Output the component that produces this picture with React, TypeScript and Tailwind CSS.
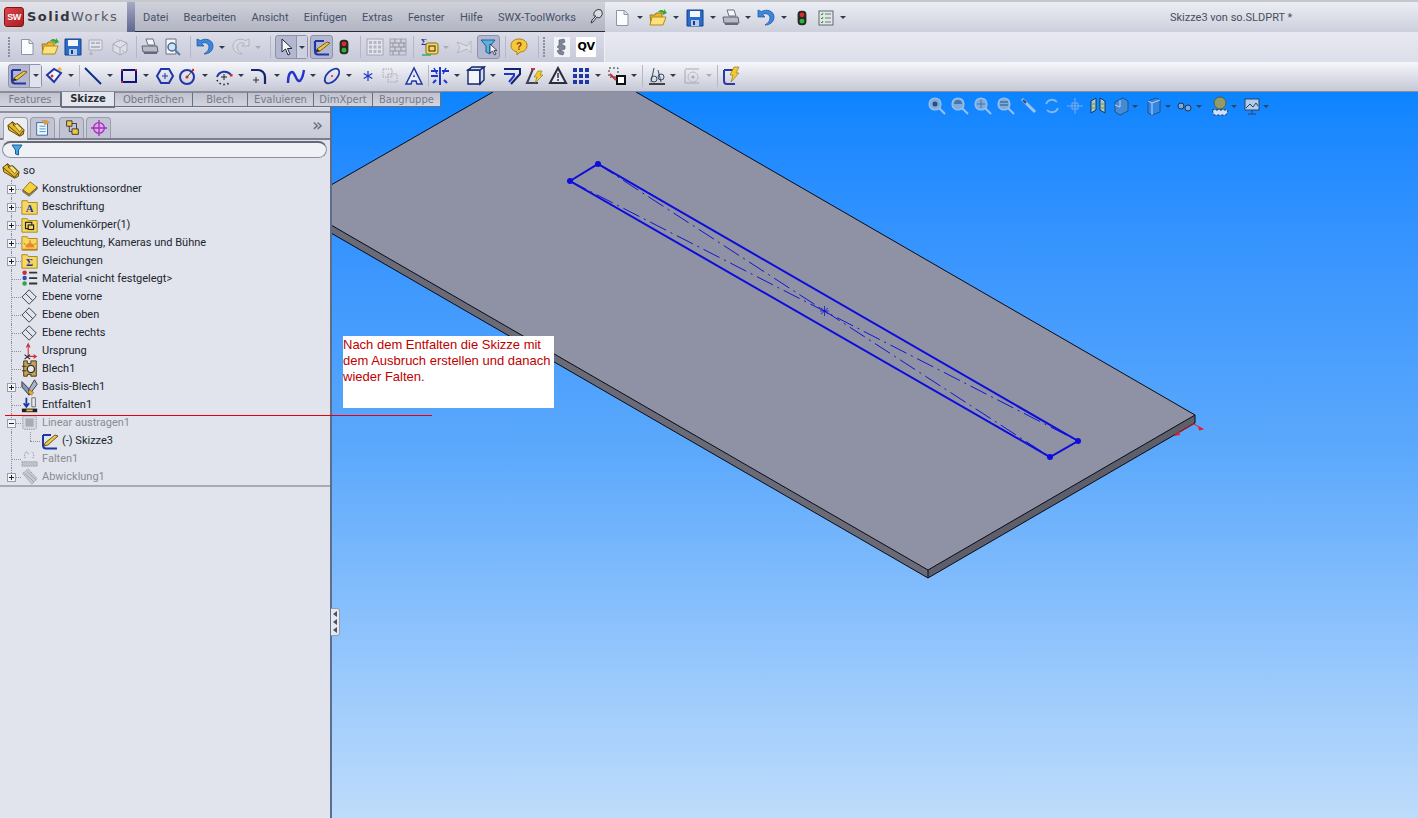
import React from "react";

type P = { children?: React.ReactNode; className?: string };
const S = ({ children, className = "w-5 h-5" }: P) => (
  <svg viewBox="0 0 20 20" className={`shrink-0 ${className}`}>{children}</svg>
);

const Caret = ({ dim }: { dim?: boolean }) => (
  <span className="flex w-2 h-5 items-center justify-center shrink-0">
    <span className={`w-0 h-0 border-l-[3px] border-r-[3px] border-t-[3px] border-l-transparent border-r-transparent ${dim ? "border-t-[#a8aab8]" : "border-t-[#33384a]"}`} />
  </span>
);
const Sep = ({ className = "" }: { className?: string }) => <span className={`w-px h-[22px] bg-[#b5b7c8] shrink-0 ${className}`} />;
const Grip = ({ className = "" }: { className?: string }) => (
  <span className={`w-[10px] h-[22px] shrink-0 flex flex-col items-center justify-between py-px ${className}`}>
    {[0, 1, 2, 3, 4, 5, 6].map((i) => <span key={i} className="w-[2px] h-[2px] bg-[#8b8ea2]" />)}
  </span>
);
const M = ({ c, children }: { c: string; children: React.ReactNode }) => <span className={`flex shrink-0 ${c}`}>{children}</span>;

const NewDoc = () => <S><path d="M4.500 2.500h8l3.500 3.500v11.500H4.500z" fill="#fbfcfe" stroke="#8d95aa" /><path d="M12 2.500v4h4" fill="#e3e6ef" stroke="#8d95aa" /></S>;
const Open = () => <S><path d="M2 7h5l1-2h6v11H3z" fill="#e9b52c" stroke="#9c7a1a" /><path d="M4 9h14l-3 8H2z" fill="#fbe27a" stroke="#b28a20" /><path d="M10 4c2-2.500 4-2.500 6-1V1l3 4-4 2V5c-2-1-3-1-5-1z" fill="#35a83a" /></S>;
const Save = () => <S><path d="M2 2h16v16H2z" fill="#2a6cc8" stroke="#123f8c" /><path d="M5 3h10v6H5z" fill="#f3f6fb" /><path d="M6 12h8v6H6z" fill="#b7cbe8" /><path d="M8 13h2v4H8z" fill="#123f8c" /></S>;
const Print = () => <S><path d="M6 2h7l2 6H8z" fill="#f5f6f9" stroke="#6d7080" /><path d="M2 9h15l1 6H3z" fill="#b8bac6" stroke="#5d6070" /><path d="M4 15h13v2H4z" fill="#666a78" /></S>;
const Preview = () => <S><path d="M4 2h10v15H4z" fill="#f6f7fb" stroke="#6d7080" /><circle cx="10" cy="10" r="4" fill="#cfe3f6" stroke="#4b6b92" strokeWidth="1.500" /><path d="M13 13l5 5" stroke="#4d7fb0" strokeWidth="2" /></S>;
const Undo = () => <S><path d="M2 2v7h7L6.500 6.500C10 4.500 14 6.500 14 10c0 3-2 5-5 7 5 0 9-3 9-8 0-6-7-8.500-12.500-5.500z" fill="#3d86dc" stroke="#14509c" strokeWidth=".7" /></S>;
const Redo = () => <S><g transform="matrix(-1 0 0 1 20 0)"><path d="M2 2v7h7L6.500 6.500C10 4.500 14 6.500 14 10c0 3-2 5-5 7 5 0 9-3 9-8 0-6-7-8.500-12.500-5.500z" fill="#d8dae2" stroke="#a6a9b8" strokeWidth=".8" /></g></S>;
const Traffic = () => <S className="w-4 h-5"><rect x="4.500" y="1" width="11" height="18" rx="4.500" fill="#262a26" /><circle cx="10" cy="6" r="3" fill="#e02a2a" /><circle cx="10" cy="14" r="3" fill="#2fb43a" /></S>;
const GrayForm = () => <S><path d="M3 3h13v10H3z" fill="#e4e5ec" stroke="#a9abba" /><path d="M5 5h4v2H5zM10 5h4v2h-4zM5 9h9v2H5z" fill="#b4b6c4" /><path d="M5 14v4m-2-2l2 2 2-2" stroke="#a9abba" fill="none" /></S>;
const GrayCube = () => <S><path d="M3 7l7-4 7 3v8l-7 4-7-4z" fill="#dddfe7" stroke="#a9abba" /><path d="M3 7l7 4 7-5M10 11v7" stroke="#a9abba" fill="none" /><path d="M7 2l3 3M12 13l4 4" stroke="#b5b7c4" /></S>;
const Cursor = () => <S><path d="M6 2v13l3.500-3 2.500 6 2-1-2.500-5.500H16z" fill="#f4f5f9" stroke="#23263a" /></S>;
const SketchIco = () => <S><path d="M3 4v10c0 2 1 3.500 3 3.500h11" fill="none" stroke="#1f36a8" strokeWidth="2.200" /><path d="M3 4h9" stroke="#1f36a8" strokeWidth="2" /><path d="M5 12l10-7 3 1-10 8-4 1z" fill="#f0c83c" stroke="#5a4410" strokeWidth=".8" /><path d="M4 15l1-3 3 2z" fill="#222" /></S>;
const Grid = ({ c = "#b4b6c4" }: { c?: string }) => <S><rect x="2" y="2" width="16" height="16" fill="#e4e5ec" stroke="#a4a6b6" /><path d="M4 4h3v3H4zM8.500 4h3v3h-3zM13 4h3v3h-3zM4 8.500h3v3H4zM8.500 8.500h3v3h-3zM13 8.500h3v3h-3zM4 13h3v3H4zM8.500 13h3v3h-3zM13 13h3v3h-3z" fill={c} /></S>;
const Bricks = () => <S><rect x="2" y="2" width="16" height="16" fill="#cfd0da" stroke="#a4a6b6" /><path d="M2 6h16M2 10h16M2 14h16M7 2v4M13 2v4M5 6v4M11 6v4M16 6v4M7 10v4M13 10v4M5 14v4M11 14v4" stroke="#8f91a2" fill="none" /></S>;
const SigmaBox = () => <S><text x="1" y="8" fontSize="9" fontWeight="700" fill="#1f36a8" fontFamily="Liberation Serif">Σ</text><rect x="6" y="6" width="12" height="11" rx="2" fill="#f6d860" stroke="#8a6d10" /><rect x="9" y="9" width="6" height="5" fill="none" stroke="#2b2b2b" /><path d="M2 18h9" stroke="#3a7" strokeWidth="1.500" /></S>;
const GrayArrows = () => <S><path d="M2 5l10 4 4-5v12l-4-4-10 4 3-5z" fill="#dcdde4" stroke="#b3b5c2" /></S>;
const FilterCursor = () => <S><path d="M2 3h14l-5 6v8l-4-2V9z" fill="#5ab2e0" stroke="#16609a" /><path d="M11 7v9l2.500-2 2 4 1.500-1-2-3.500H18z" fill="#f4f5f9" stroke="#23263a" strokeWidth=".8" /></S>;
const Help = () => <S><path d="M10 2c5 0 8 2.500 8 6.500S15 15 11 15l-3 3v-3.200C4.500 14 2 12 2 8.500S5 2 10 2z" fill="#f5c93c" stroke="#a9801a" /><text x="10" y="12.500" textAnchor="middle" fontSize="10" fontWeight="700" fill="#8f3c12" fontFamily="Liberation Sans">?</text></S>;
const Gear = () => <S><rect x="2" y="0" width="16" height="20" fill="#f2f3f7" /><path d="M7 3l5-1 1 3-4 2 4 2v3l-5 2 4 1-1 3-4-1-2-3 3-2-3-2 2-2z" fill="#7d8797" stroke="#505a6b" strokeWidth=".6" /></S>;
const Qv = () => <span className="w-5 h-5 bg-white flex items-center justify-center text-[11px] font-bold text-black font-['DejaVu_Sans'] shrink-0 tracking-tighter ml-px">QV</span>;
const Options = () => <S><rect x="3" y="3" width="14" height="14" fill="#e2e7e4" stroke="#5d6a70" /><path d="M9 6h6M9 10h6M9 14h6" stroke="#6d7880" /><path d="M5 6l1 1 1-2M5 10l1 1 1-2M5 14l1 1 1-2" stroke="#1d9a3a" fill="none" /></S>;
const Pin = () => <S><path d="M8 9a5 5 0 017-6 5 5 0 01-2 8l-2-1-4 5-2 1 1-3 4-4z" fill="#dcdde3" stroke="#3b3d46" /></S>;

const Dimension = () => <S><path d="M3 9l7-6 7 4-7 9z" fill="#f5f6fa" stroke="#1f36a8" strokeWidth="2" /><circle cx="8" cy="10" r="1.500" fill="#c33" /><path d="M13 3l3-2 2 3-2 1z" fill="#f0b82c" /></S>;
const Line = () => <S><path d="M2 2l16 16" stroke="#0b2f86" strokeWidth="2" /></S>;
const RectI = () => <S><rect x="3" y="4" width="14" height="12" fill="none" stroke="#12127a" strokeWidth="2" /><path d="M2 3h2v2H2zM16 3h2v2h-2zM2 15h2v2H2z" fill="#d4262a" /></S>;
const Poly = () => <S><path d="M6 3h8l4 7-4 7H6l-4-7z" fill="none" stroke="#1f36a8" strokeWidth="2" /><path d="M10 7v6M7 10h6" stroke="#1f36a8" /></S>;
const CircleI = () => <S><circle cx="10" cy="11" r="7" fill="none" stroke="#1f36a8" strokeWidth="2" /><path d="M10 11l6-7" stroke="#333" /><circle cx="10" cy="11" r="1.500" fill="#d4262a" /><circle cx="16" cy="4" r="1.200" fill="#d4262a" /></S>;
const Arc = () => <S><path d="M3 11a8 8 0 0114-2" fill="none" stroke="#1f36a8" strokeWidth="2" /><path d="M3 14a8 8 0 0012 3" fill="none" stroke="#222" strokeDasharray="1.500 2.500" strokeWidth="1.500" /><path d="M10 8v6M7 11h6" stroke="#222" /><path d="M16 8h2.500v2.500H16z" fill="#d4262a" /></S>;
const Fillet = () => <S><path d="M2 4h7c4 0 7 3 7 7v7" fill="none" stroke="#14246e" strokeWidth="2.200" /><path d="M7 11v6M4 14h6" stroke="#333" /></S>;
const Spline = () => <S><path d="M2 17c0-8 2-11 4-11 3 0 4 9 7 9 2.500 0 4-5 5-11" fill="none" stroke="#1f36c8" strokeWidth="2.400" /></S>;
const Ellipse = () => <S><ellipse cx="10" cy="10" rx="9" ry="5" transform="rotate(-45 10 10)" fill="none" stroke="#1f36a8" strokeWidth="1.800" /><circle cx="10" cy="10" r="1" fill="#d4262a" /></S>;
const Asterisk = () => <S><path d="M10 5v10M5.700 7.500l8.600 5M14.300 7.500l-8.600 5" stroke="#1f36c8" strokeWidth="1.200" /></S>;
const DotGrid = () => <S><rect x="3" y="3" width="9" height="8" fill="none" stroke="#a4a6b6" strokeDasharray="1.500 1" /><rect x="8" y="8" width="9" height="8" fill="none" stroke="#a4a6b6" strokeDasharray="1.500 1" /></S>;
const AIcon = () => <S><path d="M10 2L2 18h5l1-3h4l1 3h5z" fill="#e8ecf6" stroke="#1f36a8" strokeWidth="1.500" /><path d="M9 11l1-3 1 3z" fill="#1f36a8" /></S>;
const Mirror = () => <S><path d="M1 5h7M1 10h7M12 5l7 0M10 1v18M6 14l-3 3M14 14l3 3" stroke="#1f36c8" strokeWidth="2" /><path d="M4 2l3 6M16 2l-3 6" stroke="#1f36c8" strokeWidth="1.500" /></S>;
const Cube = () => <S><path d="M2 4h12v14H2z" fill="#f2f4fa" stroke="#14246e" strokeWidth="1.400" /><path d="M14 4l4-3v13l-4 4zM2 4l4-3h12l-4 3z" fill="#cfe0f4" stroke="#14246e" strokeWidth="1.400" /></S>;
const Offset = () => <S><path d="M2 3h16v5l-9 10" fill="none" stroke="#14246e" strokeWidth="2" /><path d="M2 8h10v2l-5 6" fill="none" stroke="#1f36c8" strokeWidth="2" /></S>;
const BoltTri = () => <S><path d="M8 3L2 17h11" fill="none" stroke="#40405a" strokeWidth="2" /><path d="M6 3h4" stroke="#c8303a" strokeWidth="2" /><path d="M13 5l-4 6h3l-2 6 8-8h-3l2-4z" fill="#f3cc2a" stroke="#8a6d10" strokeWidth=".6" /></S>;
const Tri = () => <S><path d="M10 2L2 17h16z" fill="#e6e8f2" stroke="#2b2b3a" strokeWidth="2" /><path d="M9.300 7h1.400v5H9.300zM9.300 13h1.400v2H9.300z" fill="#2b2b3a" /></S>;
const Pattern = () => <S><path d="M2 2h4v4H2zM8 2h4v4H8zM14 2h4v4h-4zM2 8h4v4H2zM8 8h4v4H8zM14 8h4v4h-4zM2 14h4v4H2zM8 14h4v4H8zM14 14h4v4h-4z" fill="#1f36a8" /></S>;
const Relation = () => <S><path d="M2 2h9v9H2z" fill="none" stroke="#333" strokeDasharray="2 2" /><path d="M10 10h8v8h-8z" fill="#fff" stroke="#111" strokeWidth="2" /><path d="M3 8l6 6" stroke="#c8303a" strokeWidth="2" /></S>;
const Measure = () => <S><path d="M2 18h16" stroke="#111" strokeWidth="1.500" /><path d="M7 2l-3 14M11 4l3 12" stroke="#3a4a60" /><circle cx="7" cy="13" r="3" fill="none" stroke="#3a4a60" /><circle cx="14" cy="11" r="3" fill="none" stroke="#3a4a60" /></S>;
const GrayTarget = () => <S><path d="M3 4v13h14" fill="none" stroke="#a4a6b6" /><path d="M3 3h14" stroke="#a4a6b6" /><circle cx="11" cy="11" r="5" fill="none" stroke="#b8bac6" /><circle cx="11" cy="11" r="1.500" fill="#a4a6b6" /></S>;
const Rebuild = () => <S><path d="M3 4h9M3 4v11c0 2 1 3 3 3h8" fill="none" stroke="#2a3aa8" strokeWidth="2" /><path d="M13 1l-4 8h3l-2 7 8-9h-3l3-6z" fill="#f3cc2a" stroke="#8a6d10" strokeWidth=".6" /></S>;

const Zoom = ({ children }: P) => <S><circle cx="8" cy="8" r="6" fill="#8db4de" stroke="#b6cde6" strokeWidth="1.200" />{children}<path d="M12 12l6 6" stroke="#b4cde8" strokeWidth="2" /></S>;

const menu = ["Datei", "Bearbeiten", "Ansicht", "Einfügen", "Extras", "Fenster", "Hilfe", "SWX-ToolWorks"];
const tabs: [string, string, boolean][] = [
  ["Features", "w-[61px]", false],
  ["Skizze", "w-[54px]", true],
  ["Oberflächen", "w-[78px]", false],
  ["Blech", "w-[55px]", false],
  ["Evaluieren", "w-[66px]", false],
  ["DimXpert", "w-[59px]", false],
  ["Baugruppe", "w-[68px]", false],
];

const Folder = ({ children }: P) => (
  <S className="w-[18px] h-[18px]"><path d="M1 3h6l1 2h10v13H1z" fill="#f6d860" stroke="#a68416" />{children}</S>
);
const RootBlock = () => (
  <S className="w-[18px] h-[18px]"><path d="M1 6l5-4 4 3 2-1 7 7-1 5-4 2L2 11z" fill="#e6b92c" stroke="#4a3a08" /><path d="M1 6l13 11M6 2l2 5M14 17l4-5" fill="none" stroke="#4a3a08" /><path d="M8 6l3-2 6 6-3 3z" fill="#f7e27c" stroke="#4a3a08" strokeWidth=".7" /></S>
);
const TreeIcons: Record<string, React.ReactNode> = {
  design: <S className="w-[18px] h-[18px]"><path d="M2 11l8-9 8 6-9 8z" fill="#f5d23c" stroke="#8a6d10" /><path d="M2 11v2l7 5 9-8V8l-9 8z" fill="#a98b5a" stroke="#6b5a3a" /></S>,
  a: <Folder><text x="9.500" y="15.500" textAnchor="middle" fontSize="12" fontWeight="700" fill="#1f36a8" fontFamily="Liberation Serif">A</text></Folder>,
  body: <Folder><rect x="5" y="7" width="7" height="7" fill="none" stroke="#222" strokeWidth="1.300" /><rect x="8" y="10" width="6" height="5" fill="#f6d860" stroke="#222" strokeWidth="1.300" /></Folder>,
  light: <Folder><path d="M5 15a5 5 0 0110 0z" fill="#e8872a" /><path d="M3 10l2 2M10 7v3M17 10l-2 2M2 17h16" stroke="#c25a12" /></Folder>,
  sigma: <Folder><text x="9.500" y="15.500" textAnchor="middle" fontSize="12" fontWeight="700" fill="#1f36a8" fontFamily="Liberation Serif">Σ</text></Folder>,
  material: <S className="w-[18px] h-[18px]"><circle cx="4" cy="3" r="2.500" fill="#c8303a" /><circle cx="4" cy="9" r="2.500" fill="#2a50c0" /><circle cx="4" cy="15" r="2.500" fill="#2fa83a" /><path d="M9 3h9M9 9h9M9 15h9" stroke="#333" strokeWidth="2" /></S>,
  plane: <S className="w-[18px] h-[18px]"><path d="M9 2l8 8-8 8-8-8z" fill="none" stroke="#333" /><path d="M5 6l8 8" stroke="#333" /></S>,
  origin: <S className="w-[18px] h-[18px]"><path d="M8 16V3M6 6l2-4 2 4" fill="none" stroke="#c8303a" strokeWidth="1.200" /><path d="M8 16h9M14 14l3 2-3 2" fill="none" stroke="#c8303a" strokeWidth="1.200" /><path d="M4 14l6 5M10 14l-6 5" stroke="#222" strokeWidth="1.200" /></S>,
  sheet: <S className="w-[18px] h-[18px]"><path d="M3 1h4v3h4V1h6v17h-6v-2H7v2H3z" fill="#c8a456" stroke="#3a3010" /><circle cx="11" cy="10" r="4" fill="#e8eaf2" stroke="#333" strokeWidth="1.500" /><path d="M1 7h5M1 12h5" stroke="#3a3010" /></S>,
  base: <S className="w-[18px] h-[18px]"><path d="M1 4l8 8v7L1 10z" fill="#7f94b8" stroke="#333" /><path d="M9 12l6-10 3 5-9 12z" fill="#a9b4c8" stroke="#333" /><path d="M9 13l5 3-2 3-4-2z" fill="#f0a82c" stroke="#775510" strokeWidth=".6" /></S>,
  unfold: <S className="w-[18px] h-[18px]"><path d="M6 2v9M3 8l3 4 3-4" fill="none" stroke="#1f36a8" strokeWidth="2" /><path d="M12 2h4v10h-4z" fill="#e8eaf2" stroke="#666" /><path d="M1 14h17v4H1z" fill="#222" /><path d="M6 15h7v2H6z" fill="#e6c04c" /></S>,
  loft: <S className="w-[18px] h-[18px]"><rect x="2" y="2" width="15" height="15" rx="2" fill="#d7d9e0" stroke="#8a8c98" strokeDasharray="1.500 1" /><rect x="5" y="5" width="9" height="9" fill="#a8aab4" /></S>,
  sketch: <S className="w-[20px] h-[20px]"><path d="M3 4v10c0 2 1 3.500 3 3.500h11" fill="none" stroke="#1f36a8" strokeWidth="2" /><path d="M3 4h8" stroke="#1f36a8" strokeWidth="2" /><path d="M5 12L15 4l3 1-10 9-4 1z" fill="#f0c83c" stroke="#4a3a10" strokeWidth=".8" /></S>,
  fold: <S className="w-[18px] h-[18px]"><path d="M5 9c-2-2-1-6 1-7l3 3M13 9c2-2 1-6-1-7" fill="none" stroke="#a0a2ac" strokeWidth="1.200" strokeDasharray="1.500 1" /><path d="M1 13h17v5H1z" fill="#bfc1ca" stroke="#9a9ca8" strokeDasharray="1.500 1" /></S>,
  flat: <S className="w-[18px] h-[18px]"><path d="M2 6l6-5 10 11-6 6z" fill="#c9cbd4" stroke="#8f919d" strokeDasharray="1.500 1" /><path d="M4 6l10 9M7 4l9 9" stroke="#9a9ca8" /></S>,
};

type Row = { t: string; i: string; exp?: "+" | "-"; dim?: boolean; deep?: boolean };
const rows: Row[] = [
  { t: "Konstruktionsordner", i: "design", exp: "+" },
  { t: "Beschriftung", i: "a", exp: "+" },
  { t: "Volumenkörper(1)", i: "body", exp: "+" },
  { t: "Beleuchtung, Kameras und Bühne", i: "light", exp: "+" },
  { t: "Gleichungen", i: "sigma", exp: "+" },
  { t: "Material <nicht festgelegt>", i: "material" },
  { t: "Ebene vorne", i: "plane" },
  { t: "Ebene oben", i: "plane" },
  { t: "Ebene rechts", i: "plane" },
  { t: "Ursprung", i: "origin" },
  { t: "Blech1", i: "sheet" },
  { t: "Basis-Blech1", i: "base", exp: "+" },
  { t: "Entfalten1", i: "unfold" },
  { t: "Linear austragen1", i: "loft", exp: "-", dim: true },
  { t: "(-) Skizze3", i: "sketch", deep: true },
  { t: "Falten1", i: "fold", dim: true },
  { t: "Abwicklung1", i: "flat", exp: "+", dim: true },
];

function TreeRow({ r, last }: { r: Row; last: boolean }) {
  return (
    <div className="relative flex h-[18px] items-center">
      <span className={`absolute left-[11px] top-0 border-l border-dotted border-[#8f929c] ${last ? "h-[9px]" : "h-[18px]"}`} />
      <span className={`absolute top-[9px] border-t border-dotted border-[#8f929c] ${r.deep ? "left-[30px] w-[10px]" : "left-[11px] w-[10px]"}`} />
      {r.deep && <span className="absolute left-[30px] top-0 h-[9px] border-l border-dotted border-[#8f929c]" />}
      {r.exp && (
        <span className="absolute left-[7px] top-[5px] w-[9px] h-[9px] border border-[#9a9da8] bg-[#f4f5f8] flex items-center justify-center">
          <span className="relative w-[5px] h-px bg-[#222]">
            {r.exp === "+" && <span className="absolute left-[2px] top-[-2px] w-px h-[5px] bg-[#222]" />}
          </span>
        </span>
      )}
      {r.deep ? (
        <span className="ml-[40px] flex items-center w-[22px]">{TreeIcons[r.i]}</span>
      ) : (
        <span className="ml-[21px] flex items-center w-[21px]">{TreeIcons[r.i]}</span>
      )}
      <span className={`whitespace-nowrap ${r.dim ? "text-[#8a8d94]" : "text-[#20242c]"}`}>{r.t}</span>
    </div>
  );
}

const Viewport = () => (
  <svg viewBox="1 0 1086 726" className="w-full h-full block">
    <polygon points="162,0 305,0 864,323 597,478 0,133 0,93" fill="#8f92a4" />
    <polygon points="0,133 597,478 597,486 0,141" fill="#6b6b78" />
    <polygon points="597,478 864,323 864,331 597,486" fill="#5f5f6c" />
    <path d="M162 0L0 93M305 0L864 323L597 478L0 133M0 141L597 486L864 331V323M597 478V486" fill="none" stroke="#0a0a14" strokeWidth="1" />
    <path d="M267 72L719 365M239 89L747 349" fill="none" stroke="#1414d2" strokeWidth="1" strokeDasharray="18 5 2 5" />
    <path d="M239 89L267 72L747 349L719 365Z" fill="none" stroke="#0c0cdc" strokeWidth="2" />
    {[[239, 89], [267, 72], [747, 349], [719, 365]].map(([x, y]) => <circle key={x} cx={x} cy={y} r="3" fill="#0c0cdc" />)}
    <path d="M489 219h9M493.500 214v10M490 216l7 6M497 216l-7 6" stroke="#1414d2" strokeWidth=".8" />
    <path d="M863 332L844 343M863 332L872 337" stroke="#e0202a" strokeWidth="1" />
    <path d="M843 344l5-5 1 4zM873 337.500l-6-3 1 4z" fill="#e0202a" />
  </svg>
);

const row3: [string, React.ReactNode][] = [
  ["ml-[2px]", <Dimension />], ["ml-[3px]", <Caret />], ["ml-[4px]", <Sep />], ["ml-[3px]", <Line />], ["ml-[3px]", <Caret />],
  ["ml-[5px]", <RectI />], ["ml-[3px]", <Caret />], ["ml-[5px]", <Poly />], ["ml-[2px]", <CircleI />], ["ml-[4px]", <Caret />],
  ["ml-[5px]", <Arc />], ["ml-[3px]", <Caret />], ["ml-[4px]", <Fillet />], ["ml-[4px]", <Caret />], ["ml-[5px]", <Spline />],
  ["ml-[3px]", <Caret />], ["ml-[5px]", <Ellipse />], ["ml-[3px]", <Caret />], ["ml-[5px]", <Asterisk />], ["ml-[2px]", <DotGrid />],
  ["ml-[4px]", <AIcon />], ["ml-[4px]", <Sep />], ["ml-[1px]", <Mirror />], ["ml-[3px]", <Caret />], ["ml-[5px]", <Cube />],
  ["ml-[3px]", <Caret />], ["ml-[5px]", <Offset />], ["ml-[3px]", <BoltTri />], ["ml-[3px]", <Tri />], ["ml-[3px]", <Pattern />],
  ["ml-[3px]", <Caret />], ["ml-[5px]", <Relation />], ["ml-[3px]", <Caret />], ["ml-[4px]", <Sep />], ["ml-[4px]", <Measure />],
  ["ml-[2px]", <Caret />], ["ml-[5px]", <GrayTarget />], ["ml-[3px]", <Caret dim />], ["ml-[4px]", <Sep />], ["ml-[3px]", <Rebuild />],
];

const row1: [string, React.ReactNode][] = [
  ["ml-[7px]", <NewDoc />], ["ml-[4px]", <Caret />], ["ml-[4px]", <Open />], ["ml-[4px]", <Caret />], ["ml-[5px]", <Save />],
  ["ml-[4px]", <Caret />], ["ml-[4px]", <Print />], ["ml-[3px]", <Caret />], ["ml-[4px]", <Undo />], ["ml-[4px]", <Caret />],
  ["ml-[6px]", <Traffic />], ["ml-[6px]", <Options />], ["ml-[3px]", <Caret />],
];

export default function App() {
  return (
    <div className="relative w-[1418px] h-[818px] overflow-hidden bg-[#e1e4ec] font-['Roboto',sans-serif] text-[11px] flex flex-col">
      {/* Title row */}
      <div className="h-[32px] flex shrink-0 bg-[#d4d6df]">
        <div className="w-[127px] border-t-2 border-[#c6c7cc] bg-gradient-to-b from-[#e2e3ea] to-[#c9cbd5] flex items-center pl-[4px] gap-[3px]">
          <span className="w-[20px] h-[20px] rounded-[3px] bg-gradient-to-br from-[#e0454a] to-[#a81c20] border border-[#7c1418] text-white text-[9px] leading-none font-bold flex items-center justify-center font-['Liberation_Sans'] tracking-tighter">SW</span>
          <span className="font-['DejaVu_Sans'] text-[13px] tracking-[1.500px] whitespace-nowrap text-[#55586a]"><b className="text-[#33343c]">Solid</b>Works</span>
        </div>
        <div className="w-[8px] border-t-2 border-[#c6c7cc] bg-gradient-to-b from-[#a8abc4] to-[#5f6590]" />
        <div className="w-[470px] border-t-2 border-[#c6c7cc] border-b border-b-[#2a2c34] bg-gradient-to-b from-[#cfd1da] to-[#b2b5c2] flex items-center pl-[8px] pt-[3px] gap-[15.300px] text-[#44506a] relative">
          {menu.map((m) => <span key={m} className="whitespace-nowrap">{m}</span>)}
          <span className="absolute left-[451px] top-[5px]"><Pin /></span>
        </div>
        <div className="flex-1 border-t-2 border-[#c6c7cc] bg-gradient-to-b from-[#eceef4] to-[#cdd0dc] flex items-center pt-[1px]">
          {row1.map(([c, n], i) => <M key={i} c={c}>{n}</M>)}
          <span className="ml-[323px] mt-[2px] text-[#4a4e5c] whitespace-nowrap">Skizze3 von so.SLDPRT *</span>
        </div>
      </div>

      {/* Toolbar 2 */}
      <div className="h-[30px] flex shrink-0 bg-gradient-to-b from-[#e8e9f1] to-[#dcdee9]">
        <div className="w-[605px] h-full bg-gradient-to-b from-[#dcdde8] to-[#c7c9d8] border-r border-[#eef0f6] flex items-center pl-[4px] gap-[3px]">
          <Grip /><NewDoc /><Open /><Save /><GrayForm /><span className="ml-px flex"><GrayCube /></span>
          <Sep className="ml-[3px]" /><Print /><span className="-ml-px flex"><Preview /></span>
          <Sep className="ml-[5px]" /><span className="ml-px flex"><Undo /></span><Caret /><span className="ml-[2px] flex"><Redo /></span><Caret dim />
          <Sep className="ml-[5px]" />
          <span className="ml-px flex items-center w-[33px] h-[24px] border border-[#8f92aa] rounded-[3px] bg-[#b4b7d0]"><Cursor /><span className="flex-1 flex justify-center border-l border-[#8f92aa] bg-[#cfd1e0] h-full items-center"><Caret /></span></span>
          <span className="-ml-px flex items-center justify-center w-[23px] h-[24px] border border-[#8f92aa] rounded-[3px] bg-[#b4b7d0]"><SketchIco /></span>
          <Traffic />
          <Sep className="ml-[5px]" /><span className="ml-px flex"><Grid /></span><Bricks />
          <Sep className="ml-[2px]" /><span className="ml-[3px] flex"><SigmaBox /></span><span className="-ml-px flex"><Caret dim /></span><span className="ml-[2px] flex"><GrayArrows /></span>
          <span className="-ml-px flex items-center justify-center w-[23px] h-[24px] border border-[#8f92aa] rounded-[3px] bg-[#b4b7d0]"><FilterCursor /></span>
          <Sep className="ml-[2px]" /><Help />
          <Sep className="ml-[6px]" /><Grip className="-ml-[3px]" /><Gear /><Qv />
        </div>
      </div>

      {/* Toolbar 3 */}
      <div className="h-[30px] shrink-0 bg-gradient-to-b from-[#f6f7fb] to-[#c6c8d6] border-b border-[#8b8d9c] flex items-center pl-[8px] pb-[2px]">
        <span className="flex items-center w-[34px] h-[24px] border border-[#8f92aa] rounded-[3px] bg-[#b4b7d0]"><SketchIco /><span className="flex-1 flex justify-center border-l border-[#8f92aa] bg-[#e0e2ec] h-full items-center"><Caret /></span></span>
        {row3.map(([c, n], i) => <M key={i} c={c}>{n}</M>)}
      </div>

      {/* Main */}
      <div className="relative flex-1 flex min-h-0">
        <aside className="w-[332px] shrink-0 bg-[#e1e4ec] border-r-2 border-[#5c6e8c] pt-[16px] flex flex-col">
          <div className="h-[5px] border-b-2 border-[#8e909e] bg-[#d5d7e2]" />
          <div className="h-[27px] bg-gradient-to-b from-[#d8dae5] to-[#c8cad8] border-b-2 border-[#7c7e8e] flex items-end pl-[3px] gap-[2px] relative">
            <span className="w-[25px] h-[23px] bg-[#eceef4] border border-[#9a9cac] border-b-0 rounded-t-[4px] flex items-center justify-center -mb-[2px]"><RootBlock /></span>
            <span className="w-[25px] h-[21px] bg-[#c2c4d4] border border-[#9a9cac] border-b-0 rounded-t-[4px] flex items-center justify-center">
              <S className="w-[18px] h-[18px]"><path d="M3 4h12v14H3z" fill="#f4f6fa" stroke="#1f66a8" /><path d="M6 8h7M6 11h7M6 14h7" stroke="#3a8ed0" /><path d="M8 1h6l4 3-6 3z" fill="#d89a54" /></S>
            </span>
            <span className="ml-[2px] w-[25px] h-[21px] bg-[#c2c4d4] border border-[#9a9cac] border-b-0 rounded-t-[4px] flex items-center justify-center">
              <S className="w-[18px] h-[18px]"><path d="M4 2h6v6H4zM10 11h7v6h-7z" fill="#f0c83c" stroke="#333" /><path d="M7 8v6h3M10 5h5v6" fill="none" stroke="#333" /></S>
            </span>
            <span className="w-[25px] h-[21px] bg-[#c2c4d4] border border-[#9a9cac] border-b-0 rounded-t-[4px] flex items-center justify-center">
              <S className="w-[18px] h-[18px]"><circle cx="10" cy="10" r="6" fill="#e3a8e8" stroke="#a030c0" strokeWidth="1.500" /><path d="M10 1v18M1 10h18" stroke="#a030c0" strokeWidth="1.500" /></S>
            </span>
            <span className="absolute right-[7px] top-[3px] text-[#666a78] text-[18px] leading-none font-['DejaVu_Sans']">»</span>
          </div>
          <div className="h-[17px] ml-[2px] mr-[3px] mt-[1px] rounded-full bg-[#f0f1f5] border border-[#8e909e] border-t-2 border-t-[#666876] flex items-center pl-[8px]">
            <svg viewBox="0 0 12 12" className="w-[12px] h-[12px]"><path d="M1 1h10L7.500 6v5l-3-1V6z" fill="#4aa8e0" stroke="#1a5a9a" /></svg>
          </div>
          <div className="pl-[2px] pt-[4px] flex items-center h-[22px] relative">
            <span className="w-[20px] flex"><RootBlock /></span>
            <span className="ml-px text-[#20242c]">so</span>
          </div>
          <div className="border-b-2 border-[#a8aab4] h-[307px]">
            {rows.map((r, i) => <TreeRow key={r.t} r={r} last={i === rows.length - 1} />)}
          </div>
        </aside>

        <main className="relative flex-1 bg-gradient-to-b from-[#0a84ff] via-[#5ca9fc] to-[#bedcfb]">
          <Viewport />
          <div className="absolute left-[595px] top-[4px] flex items-center gap-[3px] opacity-85">
            <Zoom><circle cx="8" cy="8" r="2.500" fill="#33445a" /></Zoom>
            <Zoom><path d="M4 8a4 4 0 018 0" fill="#5a7290" /></Zoom>
            <Zoom><path d="M4 8h8M8 4v8" stroke="#5a7290" /></Zoom>
            <Zoom><path d="M4 6h8M4 9h8" stroke="#33445a" /></Zoom>
            <S><path d="M3 3l13 13" stroke="#b4cde8" strokeWidth="3" /><path d="M4 4l3 3" stroke="#33445a" strokeWidth="2" /></S>
            <S><path d="M4 8a6.500 6.500 0 0111-2M16 12a6.500 6.500 0 01-11 2" fill="none" stroke="#a0c0e6" strokeWidth="1.800" /></S>
            <S><path d="M10 2v16M2 10h16" stroke="#8fb6e4" /><path d="M7 7h6v6H7z" fill="none" stroke="#8fb6e4" /></S>
            <S><path d="M3 17V5l5-3v12zM17 17V5l-5-3v12z" fill="#b8d4e4" stroke="#223" /><path d="M4 8h3M4 12h3M13 8h3M13 12h3" stroke="#a8c820" strokeWidth="2" /></S>
            <span className="flex items-center"><S><path d="M4 6l8-4 5 3v10l-8 4-5-3z" fill="#4f8ccc" stroke="#1d4a80" /><path d="M9 4v7L4 9" fill="none" stroke="#dde" /></S><Caret /></span>
            <span className="ml-[2px] flex items-center"><S><path d="M4 5l8-3 4 2v12l-8 3-4-2z" fill="#3a86e0" stroke="#1d4a80" /><path d="M8 7v12M8 7L4 5M8 7l8-3" stroke="#cfe4f8" fill="none" /></S><Caret /></span>
            <span className="flex items-center"><S><circle cx="6" cy="10" r="3" fill="#8fb0d0" stroke="#223" /><circle cx="13" cy="12" r="3" fill="#8fb0d0" stroke="#223" /></S><Caret /></span>
            <span className="ml-[4px] flex items-center"><S><circle cx="10" cy="7" r="6" fill="#a8a050" stroke="#5a5820" /><path d="M2 14h16l-2 5H4z" fill="#eef" stroke="#222" strokeDasharray="2 2" /></S><Caret /></span>
            <span className="ml-px flex items-center"><S><rect x="3" y="3" width="14" height="11" fill="#cfd8e4" stroke="#2a3a50" /><path d="M4 12l4-4 3 3 3-4 2 3" stroke="#2a3a50" fill="none" /><path d="M10 14v3M6 18h8" stroke="#2a3a50" /></S><Caret /></span>
          </div>
          <div className="absolute -left-px top-[516px] w-[9px] h-[28px] bg-[#e6e8f0] border border-[#9a9cac] border-l-0 rounded-r-[3px] flex flex-col items-center justify-center gap-[2px]">
            {[0, 1, 2].map((i) => <span key={i} className="w-0 h-0 border-y-[3px] border-r-[4px] border-y-transparent border-r-[#4c4f60]" />)}
          </div>
        </main>

        <div className="absolute left-0 top-0 flex h-[16px] items-stretch font-['DejaVu_Sans'] text-[10px]">
          {tabs.map(([t, w, active]) => (
            <span key={t} className={`${w} flex items-center justify-center border-r border-[#6d6f7e] ${active ? "bg-[#e4e6ee] text-[#2c2e38] font-bold h-[16px] border-b-2 border-b-[#6d6f7e] border-l pb-[1px]" : "bg-gradient-to-b from-[#c0c2cf] to-[#d2d4de] text-[#777a88] h-[15px] border-b border-b-[#6d6f7e] border-t border-t-[#8a8c9a]"}`}>{t}</span>
          ))}
        </div>

        <div className="absolute left-[343px] top-[244px] w-[211px] h-[72px] bg-white text-[#c00000] font-['Liberation_Sans'] text-[13px] leading-[16px] pt-px whitespace-nowrap">
          Nach dem Entfalten die Skizze mit<br />dem Ausbruch erstellen und danach<br />wieder Falten.
        </div>
        <div className="absolute left-[5px] top-[323px] w-[427px] h-px bg-red-600" />
      </div>
    </div>
  );
}
